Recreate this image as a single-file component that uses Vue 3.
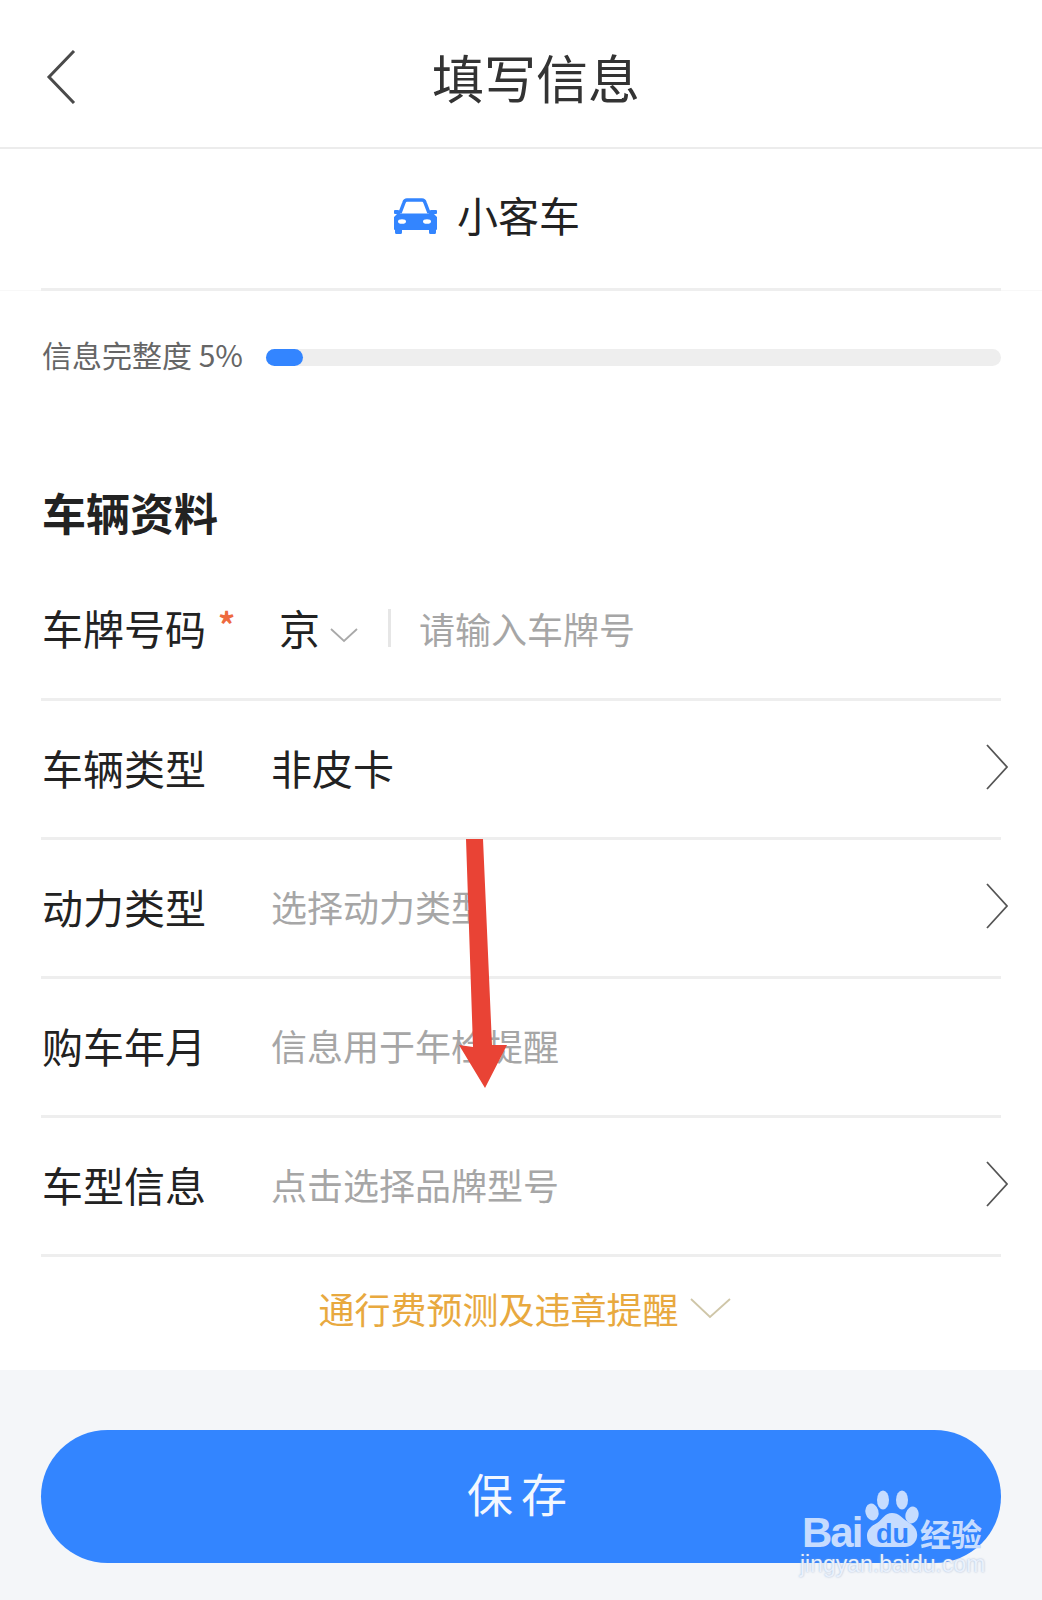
<script setup>
const rows = [
  { label: '车辆类型', value: '非皮卡', chevron: true },
  { label: '动力类型', hint: '选择动力类型', chevron: true },
  { label: '购车年月', hint: '信息用于年检提醒', chevron: false },
  { label: '车型信息', hint: '点击选择品牌型号', chevron: true }
]
</script>

<template>
  <div class="page">
    <header class="top">
      <svg class="back" width="30" height="54" viewBox="0 0 30 54" fill="none"><path d="M28 1 L3 27 L28 53" stroke="#4a4a4a" stroke-width="3"/></svg>
      <h1 class="title">填写信息</h1>
    </header>

    <div class="kind-wrap">
      <section class="kind">
        <div class="kind-main">
          <svg class="car" width="45" height="38" viewBox="0 0 45 38">
            <path d="M8 15 L12 4.500 Q12.800 2 15 2 L30 2 Q32.200 2 33 4.500 L37 15" fill="none" stroke="#3385ff" stroke-width="3.500"/>
            <path d="M1 12 h5 q1.500 0 2 2 l.5 1.500 h28 l.5 -1.500 q.5 -2 2 -2 h5 q1 0 1 1 v2 q0 1 -1 1 h-2 l3 3 v12 q0 1 -1 1 v2.500 q0 1.500 -1.500 1.500 h-4 q-1.500 0 -1.500 -1.500 v-2.500 h-27 v2.500 q0 1.500 -1.500 1.500 h-4 q-1.500 0 -1.500 -1.500 v-2.500 q-1 0 -1 -1 v-12 l3 -3 h-2 q-1 0 -1 -1 v-2 q0 -1 1 -1 z" fill="#3385ff"/>
            <ellipse cx="10" cy="23.500" rx="4" ry="2.300" fill="#fff"/>
            <ellipse cx="35" cy="23.500" rx="4" ry="2.300" fill="#fff"/>
          </svg>
          <span class="kind-name">小客车</span>
        </div>
      </section>
    </div>

    <section class="progress">
      <span class="progress-label">信息完整度 5%</span>
      <div class="track"><div class="fill"></div></div>
    </section>

    <h2 class="heading">车辆资料</h2>

    <div class="form">
      <div class="row row-plate">
        <span class="label plate-label">车牌号码<i class="star">*</i></span>
        <span class="province">京</span>
        <svg class="mini" width="28" height="16" viewBox="0 0 28 16" fill="none"><path d="M1 2 L14 14 L27 2" stroke="#a9a9a9" stroke-width="1.800"/></svg>
        <span class="sep"></span>
        <span class="hint">请输入车牌号</span>
      </div>
      <div v-for="row in rows" :key="row.label" class="row">
        <span class="label">{{ row.label }}</span>
        <span v-if="row.value" class="value">{{ row.value }}</span>
        <span v-else class="hint">{{ row.hint }}</span>
        <svg v-if="row.chevron" class="go" width="24" height="46" viewBox="0 0 24 46" fill="none"><path d="M2 1 L22 23 L2 45" stroke="#555" stroke-width="1.800"/></svg>
      </div>
    </div>

    <div class="more">
      <span>通行费预测及违章提醒</span>
      <svg width="42" height="22" viewBox="0 0 42 22" fill="none"><path d="M1 2 L20 20 L40 2" stroke="#cfc6a8" stroke-width="1.800"/></svg>
    </div>

    <footer class="foot">
      <button class="save">保存</button>
    </footer>

    <svg class="arrow" width="60" height="260" viewBox="0 0 60 260">
      <path d="M7 0 L24 0 L33 206 L48 206 L26 249 L0 206 L14 208 Z" fill="#e94335"/>
    </svg>

    <div class="mark">
      <div class="mark-logo">
        <span class="mark-bai">Bai</span>
        <span class="paw">
          <svg width="58" height="57" viewBox="0 0 58 57">
            <ellipse cx="10" cy="22" rx="6.500" ry="8.500" transform="rotate(-15 10 22)" fill="#c6dcff"/>
            <ellipse cx="21" cy="10" rx="6" ry="9.500" fill="#c6dcff"/>
            <ellipse cx="40" cy="10" rx="6" ry="9.500" fill="#c6dcff"/>
            <ellipse cx="50" cy="25" rx="6.500" ry="8.500" transform="rotate(15 50 25)" fill="#c6dcff"/>
            <path d="M30 23 C37 23 40 28 46 32 C53 36 56 41 55 47 C54 53 49 57 43 57 L17 57 C10 57 5 53 5 46 C5 40 9 36 15 33 C21 29 23 23 30 23 Z" fill="#c6dcff"/>
          </svg>
          <span class="mark-du">du</span>
        </span>
        <span class="mark-cn">经验</span>
      </div>
      <div class="mark-url">jingyan.baidu.com</div>
    </div>
  </div>
</template>

<style scoped>
.page {
  position: relative;
  width: 1042px;
  height: 1600px;
  overflow: hidden;
  background: #fff;
  font-family: "Noto Sans CJK SC", "Liberation Sans", sans-serif;
  color: #222;
}
.top {
  height: 149px;
  box-sizing: border-box;
  border-bottom: 2px solid #ececec;
  display: flex;
  align-items: center;
  justify-content: center;
  padding-left: 30px;
  padding-top: 6px;
  position: relative;
}
.back {
  position: absolute;
  left: 46px;
  top: 50px;
}
.title {
  margin: 0;
  font-size: 52px;
  font-weight: 400;
  line-height: 1;
  color: #333;
}
.kind-wrap {
  padding: 0 41px;
  height: 142px;
  box-sizing: border-box;
  border-bottom: 1px solid #f8f8f8;
}
.kind {
  height: 142px;
  box-sizing: border-box;
  border-bottom: 3px solid #eeeeee;
  display: flex;
  align-items: center;
  justify-content: center;
}
.kind-main {
  display: flex;
  align-items: center;
  gap: 20px;
  margin-left: -70px;
  margin-top: -8px;
}
.car {
  margin-top: 5px;
}
.kind-name {
  font-size: 41px;
  line-height: 1;
  color: #222;
}
.progress {
  display: flex;
  align-items: center;
  gap: 23px;
  margin: 0 41px;
  height: 133px;
  padding-left: 1px;
}
.progress-label {
  font-size: 30px;
  line-height: 1;
  color: #666;
  white-space: nowrap;
  margin-top: -8px;
}
.track {
  flex: 1;
  height: 17px;
  border-radius: 9px;
  background: #eeeeee;
}
.fill {
  width: 37px;
  height: 17px;
  border-radius: 9px;
  background: #3385ff;
}
.heading {
  margin: 0 41px;
  padding: 66px 0 0 1px;
  height: 44px;
  font-size: 44px;
  line-height: 1;
  font-weight: 700;
  color: #222;
}
.form {
  margin: 28px 41px 0;
}
.row {
  height: 139px;
  box-sizing: border-box;
  border-bottom: 3px solid #eeeeee;
  display: flex;
  align-items: center;
  padding-left: 1px;
  padding-bottom: 4px;
}
.row-plate {
  padding-bottom: 5px;
}
.label {
  width: 229px;
  flex: none;
  font-size: 41px;
  line-height: 1;
  color: #222;
}
.plate-label {
  width: 237px;
  display: flex;
}
.star {
  font-style: normal;
  color: #ee6a3f;
  font-size: 34px;
  font-weight: 700;
  margin-left: 12px;
  line-height: 1;
}
.province {
  font-size: 41px;
  line-height: 1;
  color: #222;
}
.mini {
  margin: 14px 0 0 10px;
}
.sep {
  width: 3px;
  height: 38px;
  margin: 0 28px 0 30px;
  background: #e6e6e6;
}
.value {
  font-size: 41px;
  line-height: 1;
  color: #222;
}
.hint {
  font-size: 36px;
  line-height: 1;
  color: #a6a6a6;
}
.go {
  margin-left: auto;
  margin-right: -8px;
  flex: none;
}
.more {
  height: 113px;
  display: flex;
  align-items: center;
  justify-content: center;
  gap: 11px;
  font-size: 36px;
  line-height: 1;
  color: #e8a93f;
  padding-left: 8px;
  box-sizing: border-box;
  padding-bottom: 11px;
}
.foot {
  height: 230px;
  box-sizing: border-box;
  background: #f4f6f9;
  padding: 60px 41px 0;
}
.save {
  display: block;
  width: 100%;
  height: 133px;
  border: 0;
  border-radius: 67px;
  background: #3385ff;
  color: #f2f7ff;
  font-family: inherit;
  font-size: 46px;
  letter-spacing: 8px;
  padding: 0 0 10px;
}
.arrow {
  position: absolute;
  left: 459px;
  top: 839px;
}
.mark {
  position: absolute;
  left: 802px;
  top: 1490px;
  width: 190px;
}
.mark-logo {
  display: flex;
  align-items: flex-end;
  height: 57px;
}
.mark-bai {
  width: 60px;
  flex: none;
  font-family: "Liberation Sans", sans-serif;
  font-weight: 700;
  font-size: 42px;
  line-height: 30px;
  letter-spacing: -2px;
  color: #c6dcff;
  margin-bottom: -1px;
}
.paw {
  position: relative;
  width: 58px;
  height: 57px;
  flex: none;
}
.paw svg {
  display: block;
}
.mark-du {
  position: absolute;
  left: 14px;
  top: 31px;
  font-family: "Liberation Sans", sans-serif;
  font-weight: 700;
  font-size: 27px;
  line-height: 26px;
  color: #3385ff;
}
.mark-cn {
  font-size: 31px;
  font-weight: 700;
  line-height: 34px;
  color: #c6dcff;
  white-space: nowrap;
  margin-bottom: -3px;
}
.mark-url {
  margin: 4px 0 0 -2px;
  font-family: "Liberation Sans", sans-serif;
  font-size: 23px;
  line-height: 26px;
  color: #eaf1fc;
  text-shadow: 0 0 2px rgba(140, 165, 200, 0.8);
  white-space: nowrap;
}
</style>
